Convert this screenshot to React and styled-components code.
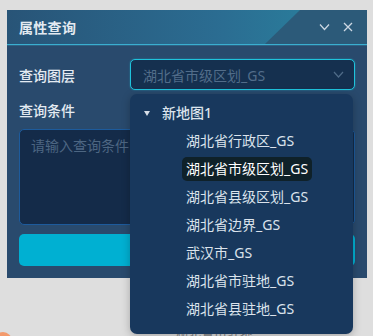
import React from 'react'
import styled, { createGlobalStyle } from 'styled-components'

const GlobalStyle = createGlobalStyle`
  html, body {
    margin: 0;
    padding: 0;
    background: #dedede;
    font-family: "Noto Sans", "Noto Sans CJK SC", sans-serif;
  }
`

const Page = styled.div`
  position: relative;
  width: 373px;
  height: 336px;
  overflow: hidden;
  padding: 10px 6px 0 7px;
  box-sizing: border-box;
`

const Panel = styled.div`
  position: relative;
  width: 360px;
  height: 268px;
  background: #294a6d;
  display: flex;
  flex-direction: column;
`

const Header = styled.div`
  position: relative;
  height: 34px;
  display: flex;
  align-items: center;
  padding: 0 14px 0 12px;
  background: linear-gradient(90deg, #285477 0%, #2b6d92 60%, #2a7b9a 82%);
  border-bottom: 1px solid #3aaed0;
  box-shadow: 0 1px 0 rgba(58, 174, 208, 0.25);
  overflow: hidden;

  &::after {
    content: "";
    position: absolute;
    top: 0;
    right: 0;
    bottom: 0;
    width: 102px;
    background: #2c5a79;
    clip-path: polygon(35px 0, 100% 0, 100% 100%, 0 100%);
  }
`

const Title = styled.div`
  flex: 1;
  color: #e3eaf1;
  font-size: 14px;
  font-weight: 700;
  letter-spacing: 0.3px;
`

const HeadIcons = styled.div`
  position: relative;
  z-index: 1;
  display: flex;
  align-items: center;
  gap: 13px;
  color: #cdd8e3;
`

const Body = styled.div`
  flex: 1;
  padding: 14px 12px 12px;
  display: flex;
  flex-direction: column;
`

const Row = styled.div`
  display: flex;
  align-items: center;
  height: 31px;
`

const Label = styled.div`
  width: 111px;
  color: #e4ebf2;
  font-size: 14px;
  font-weight: 500;
`

const Select = styled.div`
  flex: 1;
  height: 31px;
  box-sizing: border-box;
  border: 1px solid #1fc3dc;
  border-radius: 5px;
  background: #15304f;
  box-shadow: 0 0 2px rgba(31, 195, 220, 0.5);
  display: flex;
  align-items: center;
  padding: 0 10px 0 12px;
  color: #526d8a;
  font-size: 14px;

  span { flex: 1; }
`

const CondLabel = styled(Label)`
  margin-top: 8px;
  height: 24px;
  display: flex;
  align-items: center;
`

const TextArea = styled.div`
  margin-top: 7px;
  height: 96px;
  box-sizing: border-box;
  border: 1px solid #1d5b9c;
  border-radius: 5px;
  background: #142b49;
  padding: 5px 11px;
  color: #4d6682;
  font-size: 14px;
`

const Button = styled.div`
  margin-top: 9px;
  height: 32px;
  border-radius: 5px;
  background: #00b0d2;
`

const Dropdown = styled.div`
  position: absolute;
  left: 130px;
  top: 94px;
  width: 223px;
  height: 240px;
  box-sizing: border-box;
  border-radius: 7px;
  background: #18385d;
  box-shadow: 0 2px 8px rgba(0, 0, 0, 0.25);
  padding: 5px 0 0;
  z-index: 5;
`

const Node = styled.div`
  height: 28px;
  display: flex;
  align-items: center;
  padding-left: ${p => p.$indent}px;
`

const Caret = styled.span`
  width: 0;
  height: 0;
  border-left: 3.5px solid transparent;
  border-right: 3.5px solid transparent;
  border-top: 5px solid #d6dee7;
  margin-right: 8px;
`

const NodeText = styled.span`
  font-size: 14px;
  color: ${p => (p.$selected ? '#ffffff' : '#dbe3ec')};
  background: ${p => (p.$selected ? '#0f2129' : 'transparent')};
  border-radius: 5px;
  padding: 1px 4px;
  line-height: 22px;
  font-weight: ${p => (p.$root ? 500 : 400)};
`

const Behind = styled.div`
  position: absolute;
  left: 0;
  bottom: 0;
  width: 373px;
  height: 10px;
`

const Blob = styled.div`
  position: absolute;
  left: -6px;
  top: 6px;
  width: 18px;
  height: 18px;
  border-radius: 50%;
  background: #f39a6c;
`

const BehindText = styled.div`
  position: absolute;
  left: 175px;
  top: -4px;
  font-size: 13px;
  color: #8a8a8a;
`

const layers = [
  '湖北省行政区_GS',
  '湖北省市级区划_GS',
  '湖北省县级区划_GS',
  '湖北省边界_GS',
  '武汉市_GS',
  '湖北省市驻地_GS',
  '湖北省县驻地_GS',
]

export default function App() {
  return (
    <>
      <GlobalStyle />
      <Page>
        <Panel>
          <Header>
            <Title>属性查询</Title>
            <HeadIcons>
              <svg width="11" height="8" viewBox="0 0 11 8">
                <path d="M1 1.5 L5.5 6.5 L10 1.5" fill="none" stroke="currentColor" strokeWidth="1.2" />
              </svg>
              <svg width="10" height="10" viewBox="0 0 10 10">
                <path d="M1 1 L9 9 M9 1 L1 9" fill="none" stroke="currentColor" strokeWidth="1.3" />
              </svg>
            </HeadIcons>
          </Header>
          <Body>
            <Row>
              <Label>查询图层</Label>
              <Select>
                <span>湖北省市级区划_GS</span>
                <svg width="11" height="7" viewBox="0 0 11 7">
                  <path d="M1 1 L5.5 6 L10 1" fill="none" stroke="#4f6b88" strokeWidth="1.2" />
                </svg>
              </Select>
            </Row>
            <CondLabel>查询条件</CondLabel>
            <TextArea>请输入查询条件</TextArea>
            <Button />
          </Body>
        </Panel>
        <Dropdown>
          <Node $indent={14}>
            <Caret />
            <NodeText $root>新地图1</NodeText>
          </Node>
          {layers.map(name => (
            <Node key={name} $indent={52}>
              <NodeText $selected={name === '湖北省市级区划_GS'}>{name}</NodeText>
            </Node>
          ))}
        </Dropdown>
        <Behind>
          <Blob />
          <BehindText>湖北省市驻地</BehindText>
        </Behind>
      </Page>
    </>
  )
}
